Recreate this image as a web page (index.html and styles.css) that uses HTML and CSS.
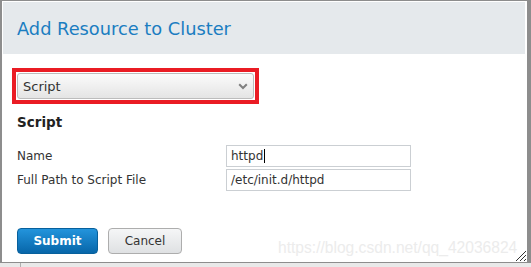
FILE: index.html
```html
<!DOCTYPE html>
<html>
<head>
<meta charset="utf-8">
<link rel="stylesheet" href="styles.css">
</head>
<body>
<div class="dialog">
  <div class="header"><h1 class="title">Add Resource to Cluster</h1></div>
  <div class="content">
    <div class="highlight">
      <div class="select">
        <span>Script</span>
        <svg class="chev" width="10" height="7" viewBox="0 0 10 7"><path d="M1.2 1.2 L5 5 L8.8 1.2" fill="none" stroke="#808080" stroke-width="2"/></svg>
      </div>
    </div>
    <h2 class="section">Script</h2>
    <div class="form">
      <label class="lbl">Name</label>
      <div class="input">httpd<span class="caret"></span></div>
      <label class="lbl">Full Path to Script File</label>
      <div class="input">/etc/init.d/httpd</div>
    </div>
    <div class="buttons">
      <button class="btn primary">Submit</button>
      <button class="btn secondary">Cancel</button>
    </div>
  </div>
  <div class="watermark">https://blog.csdn.net/qq_42036824</div>
  <svg class="grip" width="12" height="12" viewBox="0 0 12 12">
    <path d="M1 11 L11 1 M5 11 L11 5 M9 11 L11 9" stroke="#333" stroke-width="1"/>
  </svg>
</div>
<div class="below"><div class="vline"></div></div>
</body>
</html>
```
FILE: styles.css
```css
html, body {
  margin: 0;
  padding: 0;
}
body {
  background: #e9e9e9;
  font-family: "DejaVu Sans", sans-serif;
  width: 531px;
  height: 267px;
  overflow: hidden;
}
.dialog {
  position: relative;
  box-sizing: border-box;
  width: 531px;
  height: 263px;
  background: #fff;
  border-style: solid;
  border-color: #8d8d8d;
  border-width: 1px 4px 1px 2px;
  padding: 1px 2px 0 1px;
}
.header {
  height: 52px;
  background: #e5e9ec;
  box-sizing: border-box;
  padding: 16px 0 0 14px;
}
.title {
  margin: 0;
  font-weight: normal;
  font-size: 17.8px;
  line-height: 21px;
  color: #1a7dc1;
}
.content {
  padding: 0 0 0 14px;
}
.highlight {
  margin: 14px 0 0 -5px;
  width: 247px;
  box-sizing: border-box;
  border: 4px solid #ea1c24;
  padding: 1px;
}
.select {
  box-sizing: border-box;
  height: 26px;
  border: 1px solid #bcbcbc;
  border-radius: 3px;
  background: linear-gradient(#fbfbfb, #e4e4e4);
  display: flex;
  align-items: center;
  justify-content: space-between;
  padding: 0 5px 0 5px;
  font-size: 13px;
  color: #333;
}
.chev {
  display: block;
  margin-top: 1px;
}
.section {
  margin: 10px 0 0 0;
  font-size: 13.5px;
  line-height: 16px;
  font-weight: bold;
  color: #222;
}
.form {
  margin-top: 15px;
  display: grid;
  grid-template-columns: 209px 185px;
  row-gap: 2px;
  align-items: center;
  font-size: 12px;
  color: #333;
}
.input {
  box-sizing: border-box;
  height: 22px;
  border: 1px solid #cbcfd3;
  padding: 0 4px;
  line-height: 20px;
  display: flex;
  align-items: center;
}
.caret {
  display: inline-block;
  width: 1px;
  height: 14px;
  background: #000;
  margin-left: 1px;
}
.buttons {
  margin-top: 37px;
  display: flex;
  gap: 10px;
}
.btn {
  box-sizing: border-box;
  height: 26px;
  border-radius: 4px;
  font-family: "DejaVu Sans", sans-serif;
  font-size: 12px;
  padding: 0;
  margin: 0;
}
.primary {
  width: 81px;
  font-weight: bold;
  color: #fff;
  border: 1px solid #07609c;
  background: linear-gradient(#2394dc, #0766a9);
}
.secondary {
  width: 74px;
  color: #333;
  border: 1px solid #adadad;
  background: linear-gradient(#f5f6f7, #dfe1e3);
}
.watermark {
  position: absolute;
  left: 276px;
  top: 238px;
  font-family: "Liberation Sans", Arial, sans-serif;
  font-size: 15.6px;
  color: #ececec;
  white-space: nowrap;
}
.grip {
  position: absolute;
  right: 0;
  bottom: 0;
}
.below {
  height: 4px;
  display: flex;
}
.vline {
  margin-left: 20px;
  width: 1px;
  background: #b0b0b0;
}
```
